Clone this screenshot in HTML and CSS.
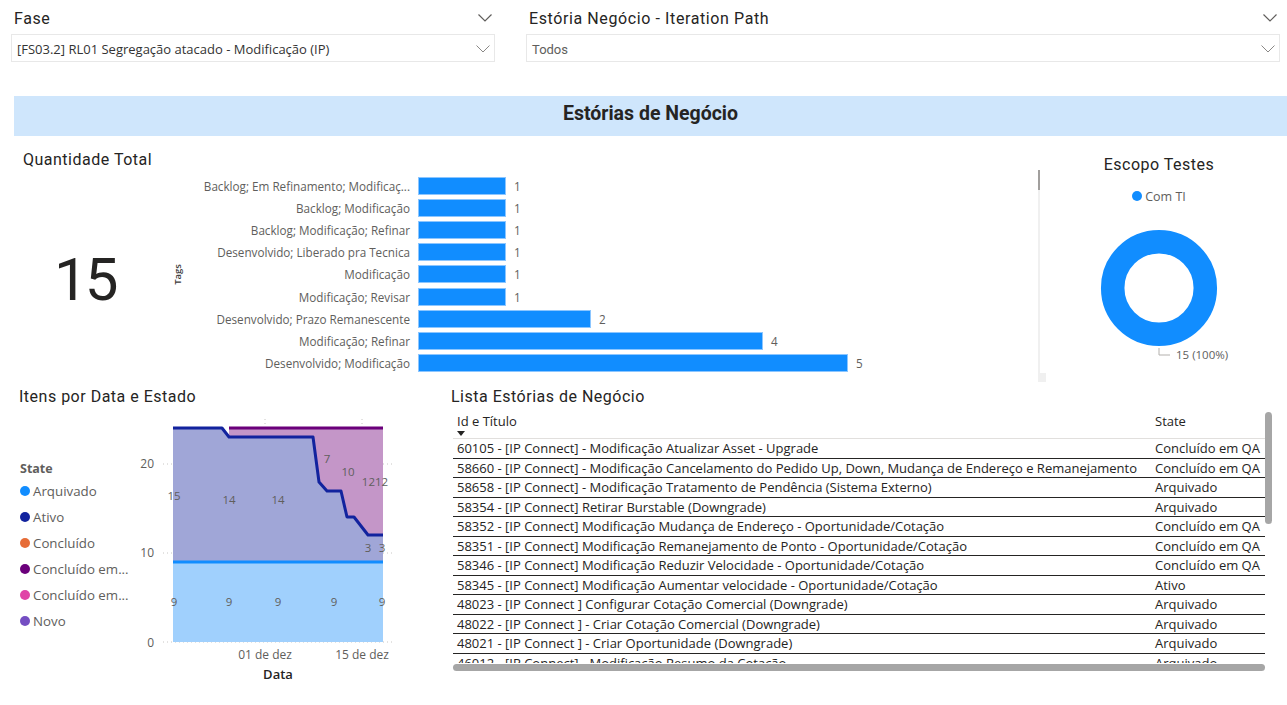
FILE: index.html
```html
<!DOCTYPE html>
<html lang="pt-BR">
<head>
<meta charset="utf-8">
<title>Estórias de Negócio</title>
<link rel="stylesheet" href="styles.css">
</head>
<body>
<div class="page">
  <div class="slicers">
    <div class="slicer s1">
      <div class="slicer-head">
        <span class="slicer-title">Fase</span>
        <svg class="chev-h" width="14" height="8" viewBox="0 0 14 8"><polyline points="0.5,0.5 7,7 13.5,0.5"/></svg>
      </div>
      <div class="slicer-box">
        <span class="slicer-val">[FS03.2] RL01 Segregação atacado - Modificação (IP)</span>
        <svg class="chev-b" width="14" height="8" viewBox="0 0 14 8"><polyline points="0.5,0.5 7,7 13.5,0.5"/></svg>
      </div>
    </div>
    <div class="slicer s2">
      <div class="slicer-head">
        <span class="slicer-title">Estória Negócio - Iteration Path</span>
        <svg class="chev-h" width="14" height="8" viewBox="0 0 14 8"><polyline points="0.5,0.5 7,7 13.5,0.5"/></svg>
      </div>
      <div class="slicer-box">
        <span class="slicer-val din">Todos</span>
        <svg class="chev-b" width="14" height="8" viewBox="0 0 14 8"><polyline points="0.5,0.5 7,7 13.5,0.5"/></svg>
      </div>
    </div>
  </div>

  <div class="band">Estórias de Negócio</div>

  <div class="middle">
    <div class="card">
      <div class="vtitle">Quantidade Total</div>
      <div class="big">15</div>
    </div>

    <div class="barchart">
      <div class="axis-col"><span class="axis-title">Tags</span></div>
      <div class="bars">
        <div class="brow"><span class="blabel">Backlog; Em Refinamento; Modificaç...</span><span class="bar" style="width:86px"></span><span class="bval">1</span></div>
        <div class="brow"><span class="blabel">Backlog; Modificação</span><span class="bar" style="width:86px"></span><span class="bval">1</span></div>
        <div class="brow"><span class="blabel">Backlog; Modificação; Refinar</span><span class="bar" style="width:86px"></span><span class="bval">1</span></div>
        <div class="brow"><span class="blabel">Desenvolvido; Liberado pra Tecnica</span><span class="bar" style="width:86px"></span><span class="bval">1</span></div>
        <div class="brow"><span class="blabel">Modificação</span><span class="bar" style="width:86px"></span><span class="bval">1</span></div>
        <div class="brow"><span class="blabel">Modificação; Revisar</span><span class="bar" style="width:86px"></span><span class="bval">1</span></div>
        <div class="brow"><span class="blabel">Desenvolvido; Prazo Remanescente</span><span class="bar" style="width:171px"></span><span class="bval">2</span></div>
        <div class="brow"><span class="blabel">Modificação; Refinar</span><span class="bar" style="width:343px"></span><span class="bval">4</span></div>
        <div class="brow"><span class="blabel">Desenvolvido; Modificação</span><span class="bar" style="width:428px"></span><span class="bval">5</span></div>
      </div>
    </div>

    <div class="vscroll"></div>

    <div class="donut">
      <div class="vtitle center">Escopo Testes</div>
      <div class="dlegend"><span class="dot blue"></span>Com TI</div>
      <svg class="donut-svg" width="241" height="165" viewBox="1046 205 241 165">
        <circle cx="1159" cy="288" r="46.3" fill="none" stroke="#118DFF" stroke-width="23.5"/>
        <polyline points="1159,348 1159,355 1170,355" fill="none" stroke="#b3b0ad" stroke-width="1"/>
        <text x="1176" y="358.5" class="dlabel">15 (100%)</text>
      </svg>
    </div>
  </div>

  <div class="bottom">
    <div class="area">
      <div class="vtitle pad19">Itens por Data e Estado</div>
      <div class="area-body">
        <div class="legend">
          <div class="leg-title">State</div>
          <div class="leg-item"><span class="dot c-arq"></span>Arquivado</div>
          <div class="leg-item"><span class="dot c-ati"></span>Ativo</div>
          <div class="leg-item"><span class="dot c-con"></span>Concluído</div>
          <div class="leg-item"><span class="dot c-cqa"></span>Concluído em...</div>
          <div class="leg-item"><span class="dot c-cem"></span>Concluído em...</div>
          <div class="leg-item"><span class="dot c-nov"></span>Novo</div>
        </div>
        <svg class="area-svg" width="310" height="290" viewBox="130 407 310 290">
          <g class="grid">
            <line x1="163" y1="464" x2="392" y2="464"/>
            <line x1="163" y1="553" x2="392" y2="553"/>
            <line x1="163" y1="642" x2="392" y2="642"/>
            <line x1="265" y1="419" x2="265" y2="642"/>
            <line x1="362" y1="419" x2="362" y2="642"/>
          </g>
          <rect x="173" y="562" width="210" height="80" fill="#A0D0FD"/>
          <polygon points="173,428 222,428 229,437 313,437 319,482 327,491 341,491 347,517 354,517 368,535 383,535 383,562 173,562" fill="#A0A6D7"/>
          <polygon points="229,428 383,428 383,535 368,535 354,517 347,517 341,491 327,491 319,482 313,437 229,437" fill="#C496C8"/>
          <line x1="173" y1="562" x2="383" y2="562" stroke="#118DFF" stroke-width="3"/>
          <line x1="229" y1="428" x2="383" y2="428" stroke="#6B007B" stroke-width="3"/>
          <polyline points="173,428 222,428 229,437 313,437 319,482 327,491 341,491 347,517 354,517 368,535 383,535" fill="none" stroke="#12239E" stroke-width="3" stroke-linejoin="round"/>
          <g class="ylab">
            <text x="154" y="468">20</text>
            <text x="154" y="557">10</text>
            <text x="154" y="647">0</text>
          </g>
          <g class="dl">
            <text x="174" y="500">15</text>
            <text x="229" y="504">14</text>
            <text x="278" y="504">14</text>
            <text x="327" y="463">7</text>
            <text x="348" y="476">10</text>
            <text x="375" y="486">1212</text>
            <text x="368" y="552">3</text>
            <text x="382" y="552">3</text>
            <text x="174" y="606">9</text>
            <text x="229" y="606">9</text>
            <text x="278" y="606">9</text>
            <text x="334" y="606">9</text>
            <text x="382" y="606">9</text>
          </g>
          <g class="xlab">
            <text x="265" y="659">01 de dez</text>
            <text x="362" y="659">15 de dez</text>
          </g>
          <text x="278" y="679" class="xtitle">Data</text>
        </svg>
      </div>
    </div>

    <div class="list">
      <div class="vtitle">Lista Estórias de Negócio</div>
      <div class="table-wrap">
        <div class="thead">
          <div class="th">Id e Título<span class="sort"></span></div>
          <div class="th">State</div>
        </div>
        <div class="trow"><div>60105 - [IP Connect] - Modificação Atualizar Asset - Upgrade</div><div>Concluído em QA</div></div>
        <div class="trow"><div>58660 - [IP Connect] - Modificação Cancelamento do Pedido Up, Down, Mudança de Endereço e Remanejamento</div><div>Concluído em QA</div></div>
        <div class="trow"><div>58658 - [IP Connect] - Modificação Tratamento de Pendência (Sistema Externo)</div><div>Arquivado</div></div>
        <div class="trow"><div>58354 - [IP Connect] Retirar Burstable (Downgrade)</div><div>Arquivado</div></div>
        <div class="trow"><div>58352 - [IP Connect] Modificação Mudança de Endereço - Oportunidade/Cotação</div><div>Concluído em QA</div></div>
        <div class="trow"><div>58351 - [IP Connect] Modificação Remanejamento de Ponto - Oportunidade/Cotação</div><div>Concluído em QA</div></div>
        <div class="trow"><div>58346 - [IP Connect] Modificação Reduzir Velocidade - Oportunidade/Cotação</div><div>Concluído em QA</div></div>
        <div class="trow"><div>58345 - [IP Connect] Modificação Aumentar velocidade - Oportunidade/Cotação</div><div>Ativo</div></div>
        <div class="trow"><div>48023 - [IP Connect ] Configurar Cotação Comercial (Downgrade)</div><div>Arquivado</div></div>
        <div class="trow"><div>48022 - [IP Connect ] - Criar Cotação Comercial (Downgrade)</div><div>Arquivado</div></div>
        <div class="trow"><div>48021 - [IP Connect ] - Criar Oportunidade (Downgrade)</div><div>Arquivado</div></div>
        <div class="trow clip"><div>46012 - [IP Connect] - Modificação Resumo da Cotação</div><div>Arquivado</div></div>
        <div class="vbar"></div>
      </div>
      <div class="hbar"></div>
    </div>
  </div>
</div>
</body>
</html>
```
FILE: styles.css
```css
* { box-sizing: border-box; }
body {
  margin: 0;
  background: #fff;
  font-family: "Open Sans", "Noto Sans", sans-serif;
  color: #252423;
}
.page { width: 1287px; height: 705px; overflow: hidden; }

/* slicers */
.slicers { display: flex; gap: 31px; padding: 8px 0 0 11px; height: 62px; }
.slicer { display: flex; flex-direction: column; }
.s1 { width: 484px; }
.s2 { width: 754px; }
.slicer-head {
  height: 26px; padding: 0 3px 6px 3px;
  display: flex; align-items: center; justify-content: space-between;
}
.slicer-title { font-family: Roboto, sans-serif; font-size: 16px; letter-spacing: 0.6px; color: #252423; }
.chev-h polyline { fill: none; stroke: #605e5c; stroke-width: 1.2; }
.chev-b polyline { fill: none; stroke: #8a8886; stroke-width: 1; }
.slicer-box {
  height: 28px; border: 1px solid #e8e8e8; padding: 2px 4px 0 5px;
  display: flex; align-items: center; justify-content: space-between;
}
.slicer-val { font-size: 13px; color: #333; }
.slicer-val.din { font-family: Roboto, sans-serif; font-size: 13px; color: #605e5c; }

/* band */
.band {
  margin: 34px 0 0 14px; height: 40px; background: #cfe6fc; padding-bottom: 6px;
  display: flex; align-items: center; justify-content: center;
  font-family: Roboto, sans-serif; font-weight: 700; font-size: 19.5px; color: #252423;
}

/* titles */
.vtitle { font-family: Roboto, sans-serif; font-size: 16px; letter-spacing: 0.5px; line-height: 20px; color: #252423; white-space: nowrap; }
.vtitle.center { text-align: center; }

/* middle row */
.middle { display: flex; height: 246px; }
.card { width: 165px; padding: 14px 0 0 23px; }
.big {
  margin-top: 80px; padding-left: 31px;
  font-family: Roboto, sans-serif; font-weight: 400; font-size: 60px; line-height: 60px;
  letter-spacing: -3px; color: #252423;
}
.barchart { width: 873px; display: flex; padding-top: 39px; }
.axis-col { width: 12px; margin-left: 6px; height: 199px; display: flex; align-items: center; justify-content: center; }
.axis-title {
  writing-mode: vertical-rl; transform: rotate(180deg);
  font-size: 9.5px; font-weight: 600; color: #3b3a39;
}
.bars { display: flex; flex-direction: column; }
.brow { height: 22.1px; display: flex; align-items: center; }
.blabel {
  width: 227px; margin-right: 9px; text-align: right; white-space: nowrap;
  font-size: 11.7px; color: #605e5c;
}
.bar { height: 16px; background: #118dff; box-shadow: 0 0 0 1px #8cc6ff; }
.bval { margin-left: 9px; font-size: 11.7px; color: #605e5c; }

.vscroll {
  width: 8px; margin-top: 34px; height: 212px; position: relative;
  border-left: 2px solid #f0f0f0;
}
.vscroll::before {
  content: ""; position: absolute; left: -2px; top: 0; width: 2px; height: 20px; background: #a19f9d;
}
.vscroll::after {
  content: ""; position: absolute; left: -2px; bottom: 0; width: 8px; height: 9px; background: #f0f0f0;
}
.donut { width: 241px; padding-right: 15px; padding-top: 19px; position: relative; }
.dlegend {
  margin-top: 12px; height: 18px; display: flex; align-items: center; justify-content: center;
  font-size: 12.5px; color: #605e5c;
}
.dot { width: 10px; height: 10px; border-radius: 50%; display: inline-block; margin-right: 3px; flex: none; }
.dot.blue { background: #118dff; }
.donut-svg { display: block; position: absolute; left: 0; top: 69px; }
.dlabel { font-family: "Open Sans", sans-serif; font-size: 11.5px; fill: #605e5c; }

/* bottom row */
.bottom { display: flex; height: 323px; }
.area { width: 445px; padding-top: 5px; }
.pad19 { padding-left: 19px; }
.area-body { display: flex; }
.legend { width: 130px; padding: 53px 0 0 20px; }
.leg-title { height: 18px; line-height: 18px; font-size: 12.5px; font-weight: 700; color: #605e5c; }
.leg-item {
  height: 26px; display: flex; align-items: center; white-space: nowrap; overflow: hidden;
  font-size: 13.3px; color: #605e5c;
}
.c-arq { background: #118dff; }
.c-ati { background: #12239e; }
.c-con { background: #e66c37; }
.c-cqa { background: #6b007b; }
.c-cem { background: #e044a7; }
.c-nov { background: #744ec2; }
.area-svg { display: block; }
.grid line { stroke: #c8c6c4; stroke-width: 1; stroke-dasharray: 1 3; }
.ylab text { font-size: 12px; fill: #605e5c; text-anchor: end; }
.dl text { font-size: 11.5px; fill: #605e5c; text-anchor: middle; }
.xlab text { font-size: 12px; fill: #605e5c; text-anchor: middle; }
.xtitle { font-size: 13px; fill: #252423; text-anchor: middle; font-weight: 600; }

.list { flex: 1; padding: 5px 0 0 6px; }
.table-wrap {
  position: relative; margin: 5px 0 0 2px; width: 812px; height: 252px;
  font-size: 13px; color: #252423;
}
.thead {
  height: 27px; display: grid; grid-template-columns: 698px 1fr;
  border-bottom: 1px solid #e1dfdd;
}
.th { padding-left: 4px; line-height: 18px; position: relative; }
.sort {
  position: absolute; left: 4px; top: 19px; width: 0; height: 0;
  border-left: 4px solid transparent; border-right: 4px solid transparent; border-top: 5px solid #252423;
}
.trow {
  height: 19.55px; display: grid; grid-template-columns: 698px 1fr;
  border-bottom: 1px solid #252423; line-height: 18px; white-space: nowrap; overflow: hidden;
}
.trow > div { padding-left: 4px; overflow: hidden; }
.trow.clip { border-bottom: none; height: 9px; }
.vbar {
  position: absolute; left: 812px; top: 0; width: 7px; height: 112px;
  background: #a6a6a6; border-radius: 4px;
}
.hbar { margin-left: 2px; width: 812px; height: 7px; background: #a6a6a6; border-radius: 4px; }
```
